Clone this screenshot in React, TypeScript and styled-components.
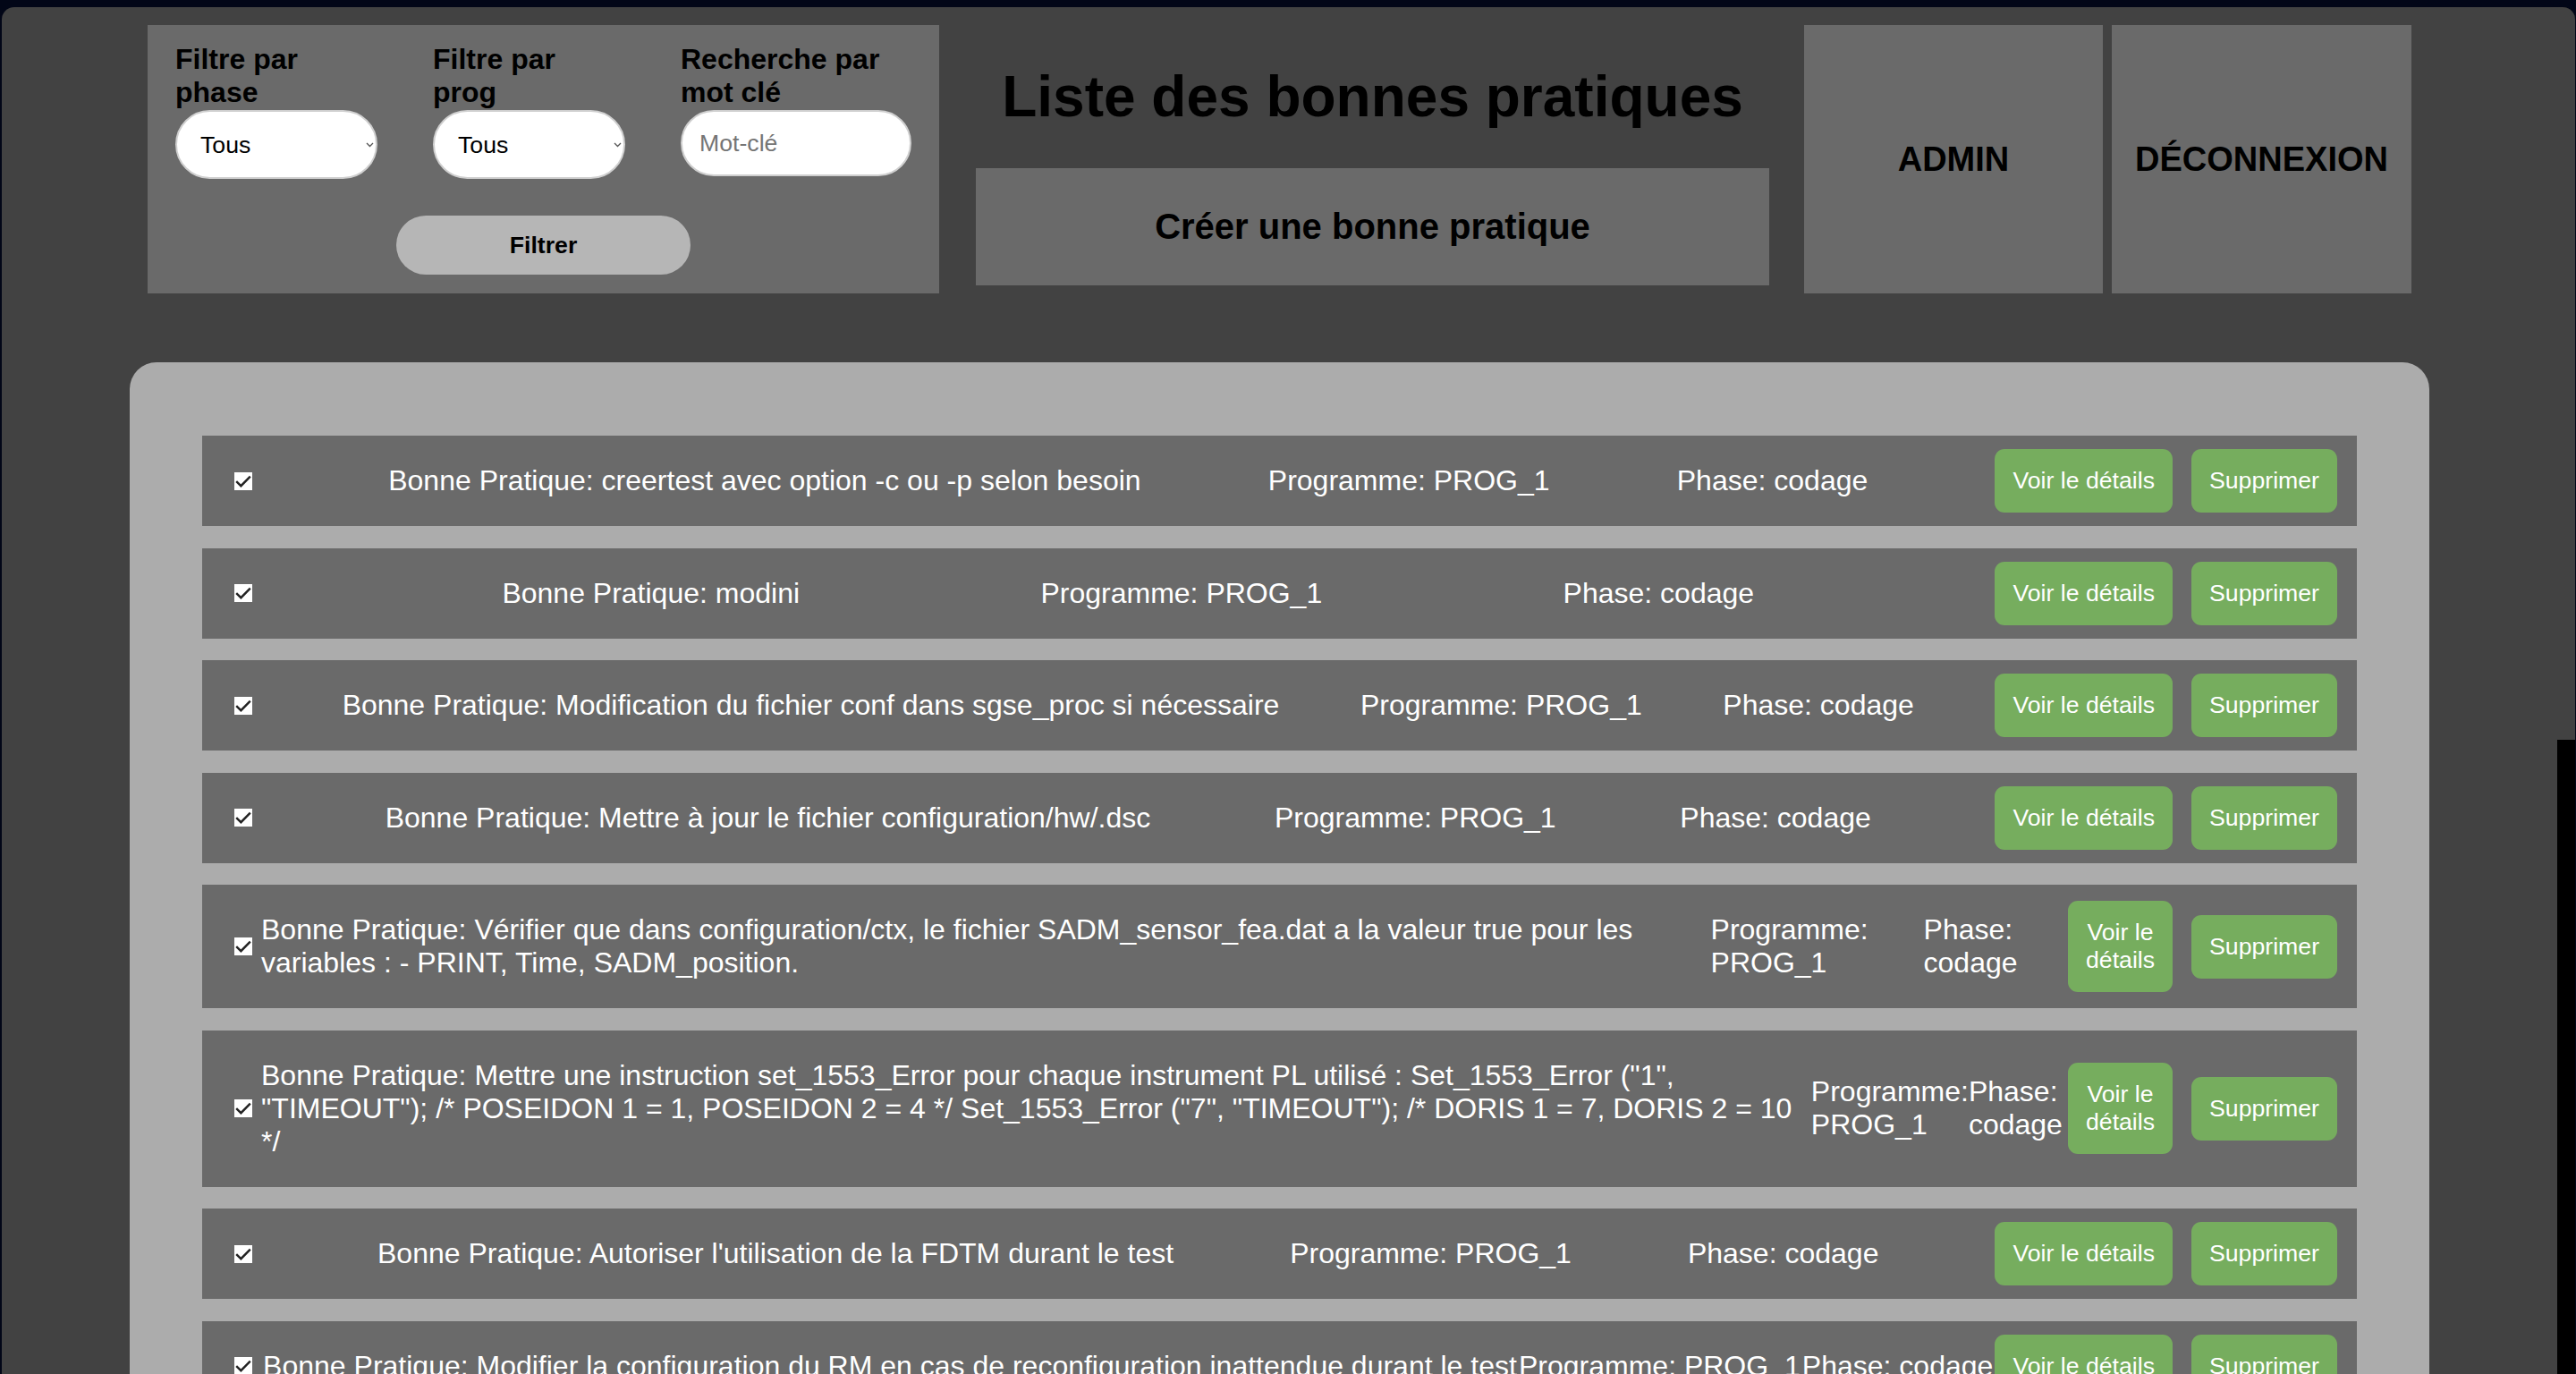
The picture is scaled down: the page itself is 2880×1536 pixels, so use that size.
import React from "react";
import styled, { createGlobalStyle } from "styled-components";

const GlobalStyle = createGlobalStyle`
  html, body {
    margin: 0;
    padding: 0;
    height: 100%;
    overflow: hidden;
    background: #020617;
  }
  body {
    font-family: "Liberation Sans", Arial, Helvetica, sans-serif;
  }
  #root {
    height: 100%;
  }
`;

const Shell = styled.div`
  box-sizing: border-box;
  display: flex;
  height: 100vh;
  padding: 8px 1px 0 2px;
`;

const Panel = styled.div`
  flex: 1;
  min-width: 0;
  display: flex;
  background: #424242;
  border-radius: 14px 14px 0 0;
  overflow: hidden;
`;

const Main = styled.main`
  flex: 1;
  min-width: 0;
  display: flex;
  flex-direction: column;
  padding-top: 20px;
`;

const ScrollTrack = styled.div`
  flex: 0 0 20px;
  display: flex;
  flex-direction: column;
  background: #000;
`;

const ScrollThumb = styled.div`
  height: 819px;
  background: #424242;
`;

const Header = styled.header`
  flex: none;
  display: flex;
  align-items: stretch;
  height: 300px;
  padding: 0 163px;
`;

const FilterBox = styled.form`
  flex: none;
  width: 885px;
  box-sizing: border-box;
  padding-top: 20px;
  display: flex;
  flex-direction: column;
  align-items: center;
  background: #6a6a6a;
`;

const ControlRow = styled.div`
  align-self: stretch;
  display: flex;
  justify-content: space-around;
  align-items: flex-start;
`;

const Field = styled.div<{ $w: number }>`
  width: ${(p) => p.$w}px;
  display: flex;
  flex-direction: column;
`;

const FieldLabel = styled.label`
  display: block;
  margin-bottom: 1px;
  font-size: 32px;
  font-weight: bold;
  line-height: normal;
  color: #000;
`;

const SelectBox = styled.div`
  position: relative;
  height: 77px;
`;

const Select = styled.select`
  appearance: none;
  -webkit-appearance: none;
  box-sizing: border-box;
  width: 100%;
  height: 100%;
  margin: 0;
  padding: 0 0 0 26px;
  border: 2px solid #cfcfcf;
  border-radius: 40px;
  background: #fff;
  font-family: inherit;
  font-size: 26.6667px;
  color: #000;
  outline: none;
`;

const Chevron = styled.svg`
  position: absolute;
  right: 4px;
  top: 50%;
  transform: translateY(-50%);
  pointer-events: none;
`;

const KeywordInput = styled.input`
  box-sizing: border-box;
  width: 100%;
  height: 74px;
  margin: 0;
  padding: 0 0 0 19px;
  border: 2px solid #cfcfcf;
  border-radius: 38px;
  background: #fff;
  font-family: inherit;
  font-size: 26.6667px;
  color: #000;
  outline: none;
  &::placeholder {
    color: #757575;
  }
`;

const FilterButton = styled.button`
  margin-top: 41px;
  width: 329px;
  height: 66px;
  border: none;
  border-radius: 33px;
  background: #b6b6b6;
  font-family: inherit;
  font-size: 26.6667px;
  font-weight: bold;
  color: #000;
`;

const TitleColumn = styled.div`
  flex: none;
  width: 887px;
  margin-left: 41px;
  display: flex;
  flex-direction: column;
`;

const Title = styled.h1`
  margin: 43px 0;
  font-size: 64px;
  font-weight: bold;
  line-height: normal;
  text-align: center;
  color: #000;
`;

const CreateButton = styled.button`
  height: 131px;
  border: none;
  background: #6a6a6a;
  font-family: inherit;
  font-size: 40px;
  font-weight: bold;
  color: #000;
`;

const NavButton = styled.button<{ $w: number; $ml: number }>`
  flex: none;
  width: ${(p) => p.$w}px;
  margin-left: ${(p) => p.$ml}px;
  border: none;
  background: #6a6a6a;
  font-family: inherit;
  font-size: 38px;
  font-weight: bold;
  color: #000;
`;

const ListPanel = styled.section`
  flex: none;
  margin: 77px 143px 0;
  padding: 82px 81px;
  display: flex;
  flex-direction: column;
  gap: 24.5px;
  background: #acacac;
  border-radius: 30px 30px 0 0;
`;

const Row = styled.div`
  display: flex;
  align-items: center;
  justify-content: space-between;
  padding: 0 22px 0 36px;
  background: #6a6a6a;
`;

const CheckBox = styled.span`
  flex: 0 0 20px;
  height: 20px;
  margin-right: 10px;
  display: flex;
  align-items: center;
  justify-content: center;
  background: #fff;
`;

const RowText = styled.p`
  margin: 32px 0;
  font-size: 32px;
  line-height: normal;
  color: #fff;
`;

const Actions = styled.div`
  display: flex;
  align-items: center;
  gap: 21px;
`;

const ActionButton = styled.button`
  padding: 20px;
  border: none;
  border-radius: 11px;
  background: #76ad5e;
  font-family: inherit;
  font-size: 26.6667px;
  line-height: normal;
  color: #fff;
`;

type Practice = { text: string; prog: string; phase: string };

const practices: Practice[] = [
  { text: "creertest avec option -c ou -p selon besoin", prog: "PROG_1", phase: "codage" },
  { text: "modini", prog: "PROG_1", phase: "codage" },
  { text: "Modification du fichier conf dans sgse_proc si nécessaire", prog: "PROG_1", phase: "codage" },
  { text: "Mettre à jour le fichier configuration/hw/.dsc", prog: "PROG_1", phase: "codage" },
  {
    text: "Vérifier que dans configuration/ctx, le fichier SADM_sensor_fea.dat a la valeur true pour les variables : - PRINT, Time, SADM_position.",
    prog: "PROG_1",
    phase: "codage",
  },
  {
    text: 'Mettre une instruction set_1553_Error pour chaque instrument PL utilisé : Set_1553_Error ("1", "TIMEOUT"); /* POSEIDON 1 = 1, POSEIDON 2 = 4 */ Set_1553_Error ("7", "TIMEOUT"); /* DORIS 1 = 7, DORIS 2 = 10 */',
    prog: "PROG_1",
    phase: "codage",
  },
  { text: "Autoriser l'utilisation de la FDTM durant le test", prog: "PROG_1", phase: "codage" },
  {
    text: "Modifier la configuration du RM en cas de reconfiguration inattendue durant le test",
    prog: "PROG_1",
    phase: "codage",
  },
];

const CheckMark = () => (
  <svg width="20" height="20" viewBox="0 0 20 20">
    <path d="M2.2 10.2 L7.4 15.2 L17.8 4.6" fill="none" stroke="#222" strokeWidth="2.4" />
  </svg>
);

const ChevronIcon = () => (
  <Chevron width="9" height="6" viewBox="0 0 9 6">
    <path d="M1 1 L4.5 4.5 L8 1" fill="none" stroke="#555" strokeWidth="1.3" />
  </Chevron>
);

export default function App() {
  return (
    <>
      <GlobalStyle />
      <Shell>
        <Panel>
          <Main>
            <Header>
              <FilterBox onSubmit={(e) => e.preventDefault()}>
                <ControlRow>
                  <Field $w={226}>
                    <FieldLabel>Filtre par phase</FieldLabel>
                    <SelectBox>
                      <Select defaultValue="Tous">
                        <option>Tous</option>
                        <option>codage</option>
                        <option>spécification</option>
                      </Select>
                      <ChevronIcon />
                    </SelectBox>
                  </Field>
                  <Field $w={215}>
                    <FieldLabel>Filtre par prog</FieldLabel>
                    <SelectBox>
                      <Select defaultValue="Tous">
                        <option>Tous</option>
                        <option>PROG_1</option>
                      </Select>
                      <ChevronIcon />
                    </SelectBox>
                  </Field>
                  <Field $w={258}>
                    <FieldLabel>Recherche par mot clé</FieldLabel>
                    <KeywordInput placeholder="Mot-clé" />
                  </Field>
                </ControlRow>
                <FilterButton type="submit">Filtrer</FilterButton>
              </FilterBox>
              <TitleColumn>
                <Title>Liste des bonnes pratiques</Title>
                <CreateButton>Créer une bonne pratique</CreateButton>
              </TitleColumn>
              <NavButton $w={334} $ml={39}>ADMIN</NavButton>
              <NavButton $w={335} $ml={10}>DÉCONNEXION</NavButton>
            </Header>
            <ListPanel>
              {practices.map((p, i) => (
                <Row key={i}>
                  <CheckBox>
                    <CheckMark />
                  </CheckBox>
                  <RowText>Bonne Pratique: {p.text}</RowText>
                  <RowText>Programme: {p.prog}</RowText>
                  <RowText>Phase: {p.phase}</RowText>
                  <Actions>
                    <ActionButton>Voir le détails</ActionButton>
                    <ActionButton>Supprimer</ActionButton>
                  </Actions>
                </Row>
              ))}
            </ListPanel>
          </Main>
          <ScrollTrack>
            <ScrollThumb />
          </ScrollTrack>
        </Panel>
      </Shell>
    </>
  );
}
